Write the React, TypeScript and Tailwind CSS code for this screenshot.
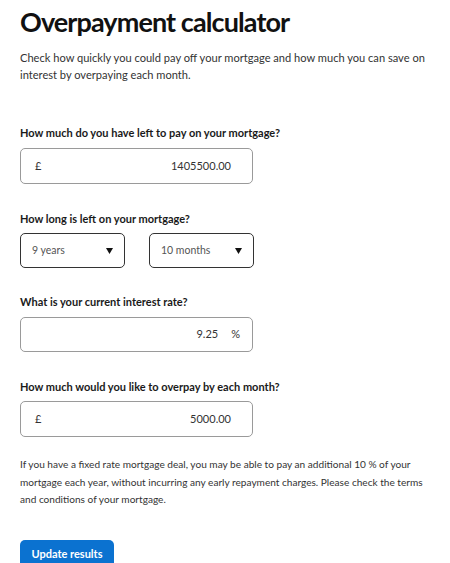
import React from "react";

function Caret() {
  return (
    <svg width="7" height="6" viewBox="0 0 7 6" className="shrink-0">
      <path d="M0 0 H7 L3.5 6 Z" fill="#111" />
    </svg>
  );
}

export default function App() {
  return (
    <div className="w-[450px] h-[563px] overflow-hidden bg-white px-5 pt-[5px] font-['Lato',sans-serif] text-[#1e1e1e]">
      <h1 className="text-[27px] font-bold leading-[34px] tracking-[-0.9px] text-[#111]">
        Overpayment calculator
      </h1>
      <p className="mt-[10px] text-[11.1px] leading-[17px] text-[#333]">
        Check how quickly you could pay off your mortgage and how much you can save on interest by overpaying each month.
      </p>

      <div className="mt-[42px] text-[11px] font-bold leading-[16px] text-[#1a1a1a]">
        How much do you have left to pay on your mortgage?
      </div>
      <div className="mt-[7px] flex h-[36px] w-[233px] items-center rounded-[5px] border border-[#9a9a9a] pl-[14px] pr-[21px] text-[11px] text-[#333]">
        <span>£</span>
        <span className="ml-auto">1405500.00</span>
      </div>

      <div className="mt-[27px] text-[11px] font-bold leading-[16px] text-[#1a1a1a]">
        How long is left on your mortgage?
      </div>
      <div className="mt-[6px] flex gap-[24px]">
        <div className="flex h-[35px] w-[105px] items-center justify-between rounded-[5px] border border-[#333] pl-[11px] pr-[11px] text-[10.5px] text-[#555]">
          <span>9 years</span>
          <Caret />
        </div>
        <div className="flex h-[35px] w-[105px] items-center justify-between rounded-[5px] border border-[#333] pl-[11px] pr-[11px] text-[10.5px] text-[#555]">
          <span>10 months</span>
          <Caret />
        </div>
      </div>

      <div className="mt-[26px] text-[11px] font-bold leading-[16px] text-[#1a1a1a]">
        What is your current interest rate?
      </div>
      <div className="mt-[7px] flex h-[35px] w-[233px] items-center justify-end rounded-[5px] border border-[#9a9a9a] pr-[12px] text-[11px] text-[#333]">
        <span>9.25</span>
        <span className="ml-[13px]">%</span>
      </div>

      <div className="mt-[27px] text-[11px] font-bold leading-[16px] text-[#1a1a1a]">
        How much would you like to overpay by each month?
      </div>
      <div className="mt-[6px] flex h-[36px] w-[233px] items-center rounded-[5px] border border-[#9a9a9a] pl-[14px] pr-[21px] text-[11px] text-[#333]">
        <span>£</span>
        <span className="ml-auto">5000.00</span>
      </div>

      <p className="mt-[19px] w-[410px] text-[10.1px] leading-[17.5px] text-[#333]">
        If you have a fixed rate mortgage deal, you may be able to pay an additional 10 % of your mortgage each year, without incurring any early repayment charges. Please check the terms and conditions of your mortgage.
      </p>

      <button className="mt-[31px] h-[30px] w-[94px] rounded-t-[5px] bg-[#0b72d0] text-[11px] font-bold text-white">
        Update results
      </button>
    </div>
  );
}
